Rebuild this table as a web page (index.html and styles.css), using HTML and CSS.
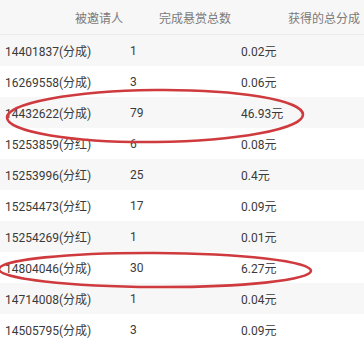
FILE: index.html
```html
<!DOCTYPE html>
<html lang="zh">
<head>
<meta charset="utf-8">
<link rel="stylesheet" href="styles.css">
</head>
<body>
<div class="wrap">
  <div class="table">
    <div class="row head">
      <div class="c1">被邀请人</div>
      <div class="c2">完成悬赏总数</div>
      <div class="c3">获得的总分成</div>
    </div>
    <div class="row odd"><div>14401837(分成)</div><div>1</div><div>0.02元</div></div>
    <div class="row"><div>16269558(分成)</div><div>3</div><div>0.06元</div></div>
    <div class="row odd"><div>14432622(分成)</div><div>79</div><div>46.93元</div></div>
    <div class="row"><div>15253859(分红)</div><div>6</div><div>0.08元</div></div>
    <div class="row odd"><div>15253996(分红)</div><div>25</div><div>0.4元</div></div>
    <div class="row"><div>15254473(分红)</div><div>17</div><div>0.09元</div></div>
    <div class="row odd"><div>15254269(分红)</div><div>1</div><div>0.01元</div></div>
    <div class="row"><div>14804046(分成)</div><div>30</div><div>6.27元</div></div>
    <div class="row odd"><div>14714008(分成)</div><div>1</div><div>0.04元</div></div>
    <div class="row"><div>14505795(分成)</div><div>3</div><div>0.09元</div></div>
  </div>
  <svg class="marks" width="364" height="343" viewBox="0 0 364 343">
    <ellipse cx="155" cy="116" rx="148" ry="26" transform="rotate(-0.6 155 116)"/>
    <ellipse cx="155" cy="270" rx="156" ry="17" transform="rotate(0.3 155 270)"/>
  </svg>
</div>
</body>
</html>
```
FILE: styles.css
```css
html, body {
  margin: 0;
  padding: 0;
  background: #ffffff;
}
body {
  font-family: Roboto, "Noto Sans CJK SC", sans-serif;
  font-size: 12px;
  color: #3a3a3a;
  width: 364px;
  height: 343px;
  overflow: hidden;
}
.wrap {
  position: relative;
  width: 364px;
  height: 343px;
}
.table {
  display: flex;
  flex-direction: column;
}
.row {
  display: grid;
  grid-template-columns: 130px 111px 1fr;
  align-items: center;
  height: 31px;
}
.row > div:first-child {
  padding-left: 5px;
}
.row.odd {
  background: #f7f7f7;
}
.row.head {
  height: 34px;
  background: #f7f7f7;
  color: #7a7a7a;
  border-bottom: 1px solid #ebebeb;
  white-space: nowrap;
}
.row.head .c1 {
  padding-left: 75px;
}
.row.head .c2 {
  padding-left: 29px;
}
.row.head .c3 {
  padding-left: 47px;
}
.marks {
  position: absolute;
  left: 0;
  top: 0;
  pointer-events: none;
}
.marks ellipse {
  fill: none;
  stroke: #cf3a3e;
  stroke-width: 2.6;
}
```
